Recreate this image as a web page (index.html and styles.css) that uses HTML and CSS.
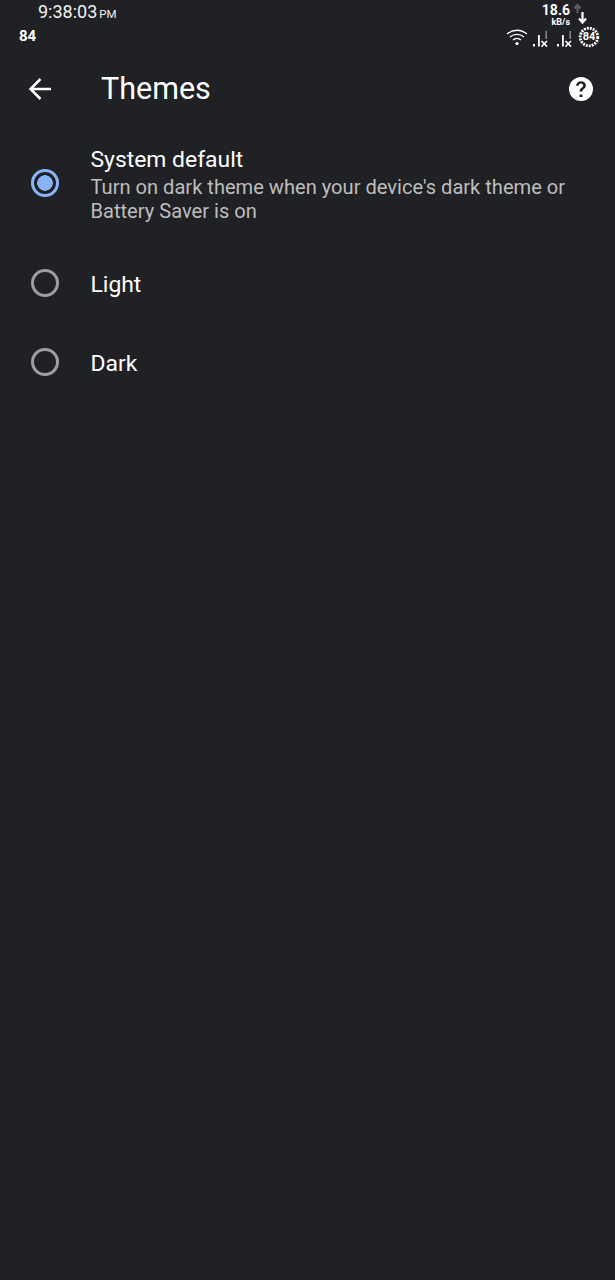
FILE: index.html
```html
<!DOCTYPE html>
<html lang="en">
<head>
<meta charset="utf-8">
<title>Themes</title>
<link rel="stylesheet" href="styles.css">
</head>
<body>
<div class="status">
  <div class="status-left">
    <div class="clock">9:38:03<span class="ampm">PM</span></div>
    <div class="level">84</div>
  </div>
  <div class="status-right">
    <div class="net">
      <div class="speed"><span class="speed-num">18.6</span><span class="speed-unit">kB/s</span></div>
      <svg class="arrows" width="17" height="24" viewBox="0 0 17 24">
        <path d="M7.500 10V2M4.500 5.500L7.500 2l3 3.500" fill="none" stroke="#5c5d5f" stroke-width="2.200"/>
        <path d="M12.500 9v10M9 15.500l3.500 4 3.500-4" fill="none" stroke="#fff" stroke-width="2.200"/>
      </svg>
    </div>
    <div class="sys-icons">
      <svg class="wifi" width="22" height="18" viewBox="0 0 22 18"><g fill="none" stroke="#fff" stroke-width="1.300"><path d="M1 6C7 1 15 1 21 6"/><path d="M4 9C8 5.600 14 5.600 18 9"/><path d="M7 12C9.300 10 12.700 10 15 12"/></g><circle cx="11" cy="15.500" r="1.600" fill="#fff"/></svg>
      <svg class="sig" width="16" height="19" viewBox="0 0 16 19"><path d="M1 16h2v2.500H1zM6 7h1.800v11.500H6z" fill="#fff"/><path d="M13.500 3h1.500v8h-1.500z" fill="#8a8b8d"/><path d="M9.500 13l5.500 5.500M15 13l-5.500 5.500" stroke="#fff" stroke-width="1.700"/></svg>
      <svg class="sig" width="16" height="19" viewBox="0 0 16 19"><path d="M1 16h2v2.500H1zM6 7h1.800v11.500H6z" fill="#fff"/><path d="M13.500 3h1.500v8h-1.500z" fill="#8a8b8d"/><path d="M9.500 13l5.500 5.500M15 13l-5.500 5.500" stroke="#fff" stroke-width="1.700"/></svg>
      <div class="batt">
        <svg class="batt-ring" width="22" height="22" viewBox="0 0 22 22"><circle cx="11" cy="11" r="8.800" fill="none" stroke="#fff" stroke-width="2.800" stroke-dasharray="2 1"/></svg>
        <span class="batt-num">84</span>
      </div>
    </div>
  </div>
</div>

<header class="toolbar">
  <svg class="back" width="24" height="24" viewBox="0 0 24 24"><path d="M23 12H2.500M12.500 2L2.500 12l10 10" fill="none" stroke="#fff" stroke-width="2.500"/></svg>
  <h1 class="title">Themes</h1>
  <svg class="help" width="24" height="24" viewBox="0 0 24 24"><path fill="#fff" fill-rule="evenodd" d="M12 0a12 12 0 1 1 0 24a12 12 0 0 1 0-24zM10.600 17.600v2.500h2.800v-2.500zM12 4.200c-2.800 0-4.800 1.900-4.900 4.500h2.600c.1-1.300 1-2.100 2.300-2.100 1.300 0 2.200.8 2.200 1.900 0 2.300-3.600 2.200-3.600 6.100h2.800c0-2.800 3.500-3.100 3.500-6.200 0-2.500-2-4.200-4.900-4.200z"/></svg>
</header>

<main class="options">
  <div class="option option-first">
    <span class="radio radio-on"></span>
    <div class="label-box label-box-first">
      <div class="label">System default</div>
      <div class="desc">Turn on dark theme when your device's dark theme or Battery Saver is on</div>
    </div>
  </div>
  <div class="option">
    <span class="radio"></span>
    <div class="label-box"><div class="label">Light</div></div>
  </div>
  <div class="option">
    <span class="radio"></span>
    <div class="label-box"><div class="label">Dark</div></div>
  </div>
</main>
</body>
</html>
```
FILE: styles.css
```css
* { box-sizing: border-box; }
html, body { margin: 0; padding: 0; }
body {
  width: 615px;
  height: 1280px;
  overflow: hidden;
  background: #202124;
  color: #fff;
  font-family: Roboto, "Liberation Sans", sans-serif;
}
.status {
  display: flex;
  justify-content: space-between;
  height: 52px;
}
.status-left { padding: 2px 0 0 19px; }
.clock {
  padding-left: 19px;
  font-size: 18px;
  line-height: 20px;
  color: #f1f1f1;
}
.ampm { font-size: 11.500px; margin-left: 2px; }
.level {
  margin-top: 3px;
  font-size: 15px;
  line-height: 18px;
  font-weight: 700;
}
.status-right {
  display: flex;
  flex-direction: column;
  align-items: flex-end;
  padding: 3px 15px 0 0;
}
.net { display: flex; margin-right: 13px; height: 24px; }
.speed {
  display: flex;
  flex-direction: column;
  align-items: flex-end;
  font-weight: 700;
}
.speed-num { font-size: 14px; line-height: 15px; }
.speed-unit { font-size: 9px; line-height: 8px; }
.sys-icons {
  display: flex;
  align-items: center;
  margin-top: -1px;
  gap: 6px;
}
.wifi { margin-right: -2px; }
.sig + .sig { margin-left: 2px; }
.batt { position: relative; width: 22px; height: 22px; }
.batt-ring { display: block; }
.batt-num {
  position: absolute;
  inset: 0;
  text-align: center;
  font-size: 11px;
  line-height: 22px;
  font-weight: 700;
}
.toolbar {
  display: flex;
  align-items: center;
  height: 73px;
  padding: 0 22px 0 28px;
}
.back { flex: none; }
.title {
  flex: 1;
  margin: 0 0 0 49px;
  font-size: 30.500px;
  line-height: 36px;
  font-weight: 400;
}
.help { flex: none; }
.options { padding: 0 0 0 31px; margin-top: -1px; }
.option {
  display: flex;
  align-items: center;
  height: 79px;
}
.option-first { height: 121px; }
.radio {
  flex: none;
  width: 28px;
  height: 28px;
  border: 3px solid #9e9e9e;
  border-radius: 50%;
  margin: 0 31.500px 4px 0;
}
.radio-on {
  border-color: #8ab4f8;
  background: radial-gradient(circle, #8ab4f8 0 7.500px, transparent 8px);
}
.label-box-first { padding-bottom: 2px; }
.label { font-size: 22.900px; line-height: 30px; }
.desc {
  width: 500px;
  font-size: 20.100px;
  line-height: 24px;
  color: #bdbdbd;
}
```
